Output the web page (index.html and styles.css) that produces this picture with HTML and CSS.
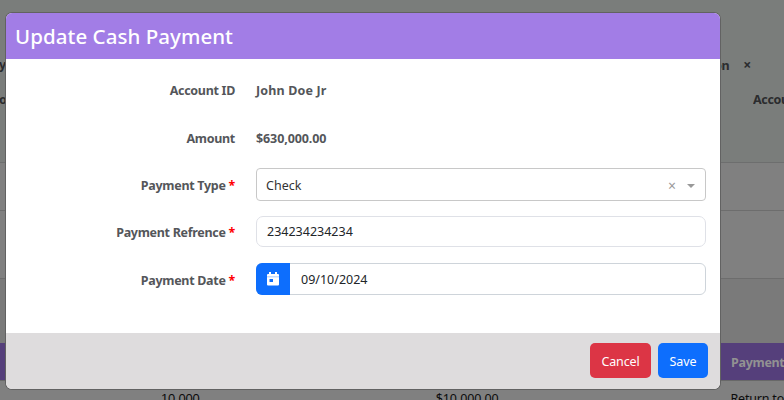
FILE: index.html
```html
<!DOCTYPE html>
<html lang="en">
<head>
<meta charset="utf-8">
<title>Update Cash Payment</title>
<link rel="stylesheet" href="styles.css">
</head>
<body>
<div class="page">
  <section class="filters">
    <div class="filter-row"><span class="cut-left">y</span><span class="tag">on<span class="tag-close">×</span></span></div>
    <div class="filter-row"><span class="cut-left">o</span><span class="account">Account</span></div>
  </section>
  <div class="band band-a"></div>
  <div class="band band-b"></div>
  <div class="band band-c"></div>
  <div class="table-head"><span>Payment</span></div>
  <div class="table-row"><span class="qty">10,000</span><span class="total">$10,000.00</span><span class="note">Return to</span></div>
</div>

<div class="modal">
  <header class="modal-header"><h1>Update Cash Payment</h1></header>
  <form class="modal-body">
    <div class="field"><label>Account ID</label><strong class="name">John Doe Jr</strong></div>
    <div class="field"><label>Amount</label><strong class="money">$630,000.00</strong></div>
    <div class="field"><label>Payment Type <i>*</i></label>
      <div class="control select"><span>Check</span><span class="clear">×</span><span class="caret"></span></div></div>
    <div class="field field-reference"><label>Payment Refrence <i>*</i></label>
      <div class="control reference"><span>234234234234</span></div></div>
    <div class="field"><label>Payment Date <i>*</i></label>
      <div class="control date">
        <span class="date-icon"><svg width="12" height="14" viewBox="0 0 12 14"><path fill="#fff" d="M2 0h2v2h4V0h2v2h1a1 1 0 0 1 1 1v1H0V3a1 1 0 0 1 1-1h1z"/><path fill="#fff" fill-rule="evenodd" d="M0 5h12v7.500a1 1 0 0 1-1 1H1a1 1 0 0 1-1-1zM2.500 7v3h3.500V7z"/><path fill="#c5dcff" d="M0 4h12v1.500H0z"/></svg></span>
        <span>09/10/2024</span>
      </div></div>
  </form>
  <footer class="modal-footer"><button class="btn cancel">Cancel</button><button class="btn save">Save</button></footer>
</div>
</body>
</html>
```

FILE: styles.css
```css
* { box-sizing: border-box; }
body {
  margin: 0;
  width: 784px;
  height: 400px;
  overflow: hidden;
  font-family: "Noto Sans", sans-serif;
  font-size: 12.5px;
  background: #808080;
}
.page { height: 400px; overflow: hidden; color: #2b2c2e; }
.filters { height: 163px; padding-top: 55px; background: #7a7d7b; border-bottom: 1px solid #6d6e6e; font-weight: 700; }
.filter-row { display: flex; height: 35px; line-height: 20px; justify-content: space-between; }
.cut-left { margin-left: -1px; }
.tag { width: 70px; letter-spacing: -.3px; }
.tag-close { margin-left: 14px; font-size: 14px; }
.account { width: 31px; overflow: hidden; letter-spacing: -.35px; }
.band { border-bottom: 1px solid #6d6d6d; background: #808080; }
.band-a { height: 48px; }
.band-b { height: 68px; }
.band-c { height: 64px; background: #7a7a7a; border-bottom: 0; }
.table-head { height: 38px; padding-left: 731px; background: #553f7b; border-bottom: 1px solid #686868; color: #929292; font-weight: 700; line-height: 39px; letter-spacing: -.3px; white-space: nowrap; }
.table-row { display: flex; height: 36px; padding-left: 161px; line-height: 35px; color: #0c0c0c; white-space: nowrap; }
.qty { width: 275px; font-family: "Liberation Sans", sans-serif; font-size: 13px; letter-spacing: -.2px; }
.total { width: 295px; letter-spacing: -.1px; }
.note { letter-spacing: -.2px; }

.modal {
  position: absolute;
  left: 6px;
  top: 13px;
  width: 714px;
  height: 376px;
  display: flex;
  flex-direction: column;
  overflow: hidden;
  border-radius: 6px;
  background: #fff;
  box-shadow: 0 0 0 1px #626262;
}
.modal-header { height: 46px; padding-left: 9px; background: #a27de6; }
h1 { margin: 0; color: #fff; font-size: 20.5px; font-weight: 500; line-height: 46px; letter-spacing: .05px; }
.modal-body { flex: 1; padding-top: 8px; }
.field { display: flex; align-items: center; height: 47.5px; }
.field-reference { height: 46.5px; margin-bottom: 1px; }
label { width: 229px; margin-right: 21px; text-align: right; color: #54565a; font-weight: 700; letter-spacing: -.3px; }
label i { color: #f00; font-style: normal; }
strong { color: #54565a; }
.name { letter-spacing: .15px; }
.money { letter-spacing: -.1px; }
.control { display: flex; align-items: center; width: 450px; color: #212529; border: 1px solid #ced4da; background: #fff; }
.select { height: 33px; margin-bottom: 2px; padding: 2px 10px 0 9px; border-color: #c8c8c8; border-radius: 4px; color: #333; }
.clear { margin-left: auto; margin-right: 11px; color: #999; font-size: 14px; }
.caret { border: 4.5px solid transparent; border-top: 4px solid #999; border-bottom: 0; }
.reference { height: 31px; margin-bottom: 3px; padding: 1px 0 0 10px; border-color: #dfe1e7; border-radius: 7px; }
.date { height: 32px; margin-bottom: 3px; border-radius: 6px; }
.date-icon { display: flex; align-items: center; justify-content: center; width: 34px; height: 32px; margin: -1px 11px -1px -1px; border-radius: 6px 0 0 6px; background: #0d6efd; }
.modal-footer { display: flex; justify-content: flex-end; gap: 7px; height: 56px; padding: 10px 12px 0; background: #dedcdd; }
.btn { height: 35px; padding: 1px 0 0; border: 0; border-radius: 5px; color: #fff; font: 12.5px "Noto Sans", sans-serif; }
.cancel { width: 61px; letter-spacing: -.15px; background: #dc3545; }
.save { width: 50px; letter-spacing: -.1px; background: #0d6efd; }
```
